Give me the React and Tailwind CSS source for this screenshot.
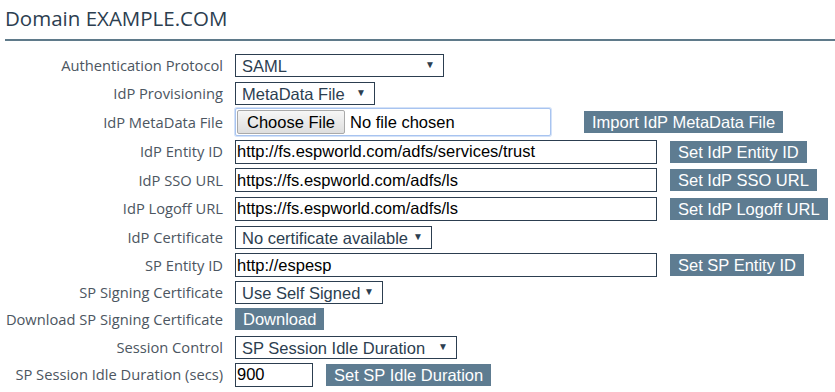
import React from "react";

const rows = [
  { label: "Authentication Protocol", h: "h-[27px]", kind: "select", value: "SAML", w: "w-[209px]" },
  { label: "IdP Provisioning", h: "h-[28px]", kind: "select", value: "MetaData File", w: "w-[140px]" },
  { label: "IdP MetaData File", h: "h-[30px]", kind: "file", button: "Import IdP MetaData File" },
  { label: "IdP Entity ID", h: "h-[29px]", kind: "input", value: "http://fs.espworld.com/adfs/services/trust", button: "Set IdP Entity ID" },
  { label: "IdP SSO URL", h: "h-[28px]", kind: "input", value: "https://fs.espworld.com/adfs/ls", button: "Set IdP SSO URL" },
  { label: "IdP Logoff URL", h: "h-[29px]", kind: "input", value: "https://fs.espworld.com/adfs/ls", button: "Set IdP Logoff URL" },
  { label: "IdP Certificate", h: "h-[28px]", kind: "select", value: "No certificate available", w: "w-[197px]" },
  { label: "SP Entity ID", h: "h-[28px]", kind: "input", value: "http://espesp", button: "Set SP Entity ID" },
  { label: "SP Signing Certificate", h: "h-[27px]", kind: "select", value: "Use Self Signed", w: "w-[148px]" },
  { label: "Download SP Signing Certificate", h: "h-[27px]", kind: "download" },
  { label: "Session Control", h: "h-[28px]", kind: "select", value: "SP Session Idle Duration", w: "w-[222px]" },
  { label: "SP Session Idle Duration (secs)", h: "h-[27px]", kind: "short", value: "900", button: "Set SP Idle Duration" },
];

function Btn({ children, className = "" }) {
  return (
    <button
      type="button"
      className={"h-[22px] px-[8px] bg-[#5e7c91] text-white text-[16.5px] leading-[22px] whitespace-nowrap " + className}
    >
      {children}
    </button>
  );
}

function FakeSelect({ value, w }) {
  return (
    <div className={"relative h-[23px] border border-[#2c3e50] bg-white " + w}>
      <select
        defaultValue={value}
        className="appearance-none w-full h-full bg-transparent pl-[6px] pr-5 text-[16.5px] leading-[21px] text-[#2c3e50] outline-none"
      >
        <option>{value}</option>
      </select>
      <span className="pointer-events-none absolute right-[8px] top-[5px] text-[10px] leading-none text-[#2c3e50]">▼</span>
    </div>
  );
}

function Control({ row }) {
  if (row.kind === "select") return <FakeSelect value={row.value} w={row.w} />;
  if (row.kind === "file")
    return (
      <div className="flex items-center">
        <div className="flex items-center w-[316px] h-[28px] border border-[#a8c4f0] rounded-[2px] bg-white px-[1px] shadow-[0_0_0_1px_#d4e2f8]">
          <span className="h-[24px] px-[9px] border border-[#a9a9a9] rounded-[2px] bg-gradient-to-b from-[#f6f6f6] to-[#dedede] text-[16.5px] leading-[22px] text-black">
            Choose File
          </span>
          <span className="ml-[5px] text-[16.5px] text-black">No file chosen</span>
        </div>
        <Btn className="ml-[33px]">{row.button}</Btn>
      </div>
    );
  if (row.kind === "download") return <Btn>Download</Btn>;
  if (row.kind === "short")
    return (
      <div className="flex items-center">
        <input
          defaultValue={row.value}
          className="w-[78px] h-[24px] border border-[#2c3e50] pl-[1px] text-[16.5px] text-black outline-none"
        />
        <Btn className="ml-[13px]">{row.button}</Btn>
      </div>
    );
  return (
    <div className="flex items-center">
      <input
        defaultValue={row.value}
        className="w-[422px] h-[24px] border border-[#2c3e50] pl-[1px] text-[16.5px] text-black outline-none"
      />
      <Btn className="ml-[13px]">{row.button}</Btn>
    </div>
  );
}

export default function App() {
  return (
    <div className="w-[835px] h-[392px] overflow-hidden bg-white pl-[5px] font-['Liberation_Sans',Arial,sans-serif]">
      <div className="h-[41px] border-b-2 border-[#5f7a8a] flex items-start pt-[3px]">
        <h1 className="font-['Open_Sans',sans-serif] text-[20.5px] text-[#2c3e50]">Domain EXAMPLE.COM</h1>
      </div>
      <div className="mt-[11px] flex flex-col">
        {rows.map((row) => (
          <div key={row.label} className={"flex items-center " + row.h}>
            <div className="w-[219px] shrink-0 pr-[1px] text-right font-['Open_Sans',sans-serif] text-[14.7px] text-[#4c5661] whitespace-nowrap">
              {row.label}
            </div>
            <div className="ml-[11px]">
              <Control row={row} />
            </div>
          </div>
        ))}
      </div>
    </div>
  );
}
